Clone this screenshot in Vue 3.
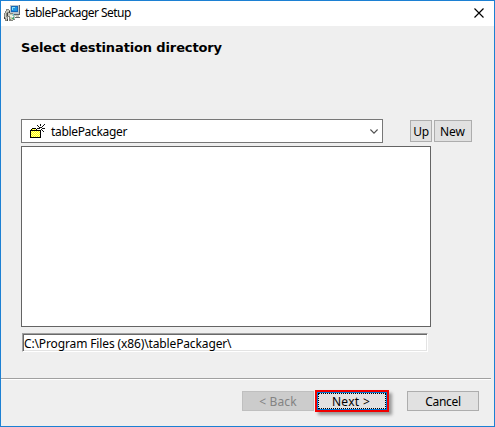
<script setup>
import { ref } from 'vue'

const folder = ref('tablePackager')
const path = ref('C:\\Program Files (x86)\\tablePackager\\')
</script>

<template>
  <main class="window">
    <header class="titlebar">
      <svg class="app-icon" viewBox="0 0 16 16" width="16" height="16" shape-rendering="crispEdges">
        <path d="M6 0h9v9H6z" fill="#b9c4cc" />
        <path d="M15 0h1v10h-1zM7 9h9v1H7z" fill="#59636b" />
        <path d="M7 1h7v6H7z" fill="#1568b8" />
        <path d="M8 2h5v4H8z" fill="#1c94e4" />
        <path d="M8 2h3v1H9v2H8z" fill="#8ee1f5" />
        <path d="M10 10h5v2h-3v-1h-2z" fill="#c3c3b6" />
        <path d="M11 12h5v1h-5z" fill="#65696a" />
        <path d="M2 4h3v1h1v3h3v2h2v5H9v1H5v-4H4v4H1v-3H0V8h1V6h1z" fill="#85867f" />
        <path d="M3 5h2v2H3v1H2v4h1v3H2v-2H1V8h1V6h1zM4 8h2v3H4z" fill="#c8c9be" />
        <path d="M6 9h4v1h1v4H9v1H7v-1H6z" fill="#b9ccbd" />
        <path d="M6 10h2v2H6z" fill="#edf3d6" />
        <path d="M8 11h1v1H8z" fill="#fff" />
        <path d="M9 12h1v2H8v-1h1z" fill="#48a775" />
        <path d="M7 13h1v1H7z" fill="#d9cf78" />
        <path d="M9 9h1v2H9z" fill="#61bfd0" />
        <path d="M0 12h1v2H0zM3 14h1v2H3zM3 8h1v3H3zM5 6h1v2H5z" fill="#444" />
      </svg>
      <span class="caption">tablePackager Setup</span>
      <svg class="close" viewBox="0 0 10 10" width="10" height="10">
        <path d="M.5.5l9 9M9.5.5l-9 9" stroke="#000" stroke-width="1.15" />
      </svg>
    </header>

    <section class="content">
      <h1>Select destination directory</h1>
      <div class="toolbar">
        <div class="combo">
          <svg class="folder" viewBox="0 0 16 14" width="16" height="14" shape-rendering="crispEdges">
            <defs>
              <pattern id="dither" width="2" height="2" patternUnits="userSpaceOnUse">
                <path d="M0 0h2v2H0z" fill="#ff0" />
                <path d="M0 0h1v1H0zM1 1h1v1H1z" fill="#ffffa8" />
              </pattern>
            </defs>
            <path d="M2 5h4v1H2zM1 7h9v6H1z" fill="url(#dither)" />
            <path d="M2 4h4v1H2zM1 5h1v1H1zM6 5h1v1H6zM0 6h11v1H0zM0 7h1v6H0zM10 7h1v6h-1zM0 13h11v1H0z" fill="#000" />
            <path d="M7 1h1v1H7zM8 2h1v1H8zM10 0h1v2h-1zM14 0h1v1h-1zM13 1h1v1h-1zM12 2h1v1h-1zM10 3h1v1h-1zM7 4h2v1H7zM12 4h3v1h-3zM9 4h1v1H9zM11 3h1v1h-1zM9 3h1v1H9zM11 5h1v1h-1zM12 6h1v1h-1zM13 7h1v1h-1z" fill="#111" />
          </svg>
          <span class="folder-name">{{ folder }}</span>
          <svg class="chevron" viewBox="0 0 8 5" width="8" height="5">
            <path d="M.4.5L4 4.1 7.6.5" fill="none" stroke="#505050" stroke-width="1.1" />
          </svg>
        </div>
        <button class="up">Up</button>
        <button class="new">New</button>
      </div>
      <div class="listing"></div>
      <div class="path"><span>{{ path }}</span></div>
    </section>

    <footer class="actions">
      <button class="back" disabled>&lt; Back</button>
      <div class="highlight"><button class="next"><span>Next &gt;</span></button></div>
      <button class="cancel">Cancel</button>
    </footer>
  </main>
</template>

<style>
body { margin: 0; overflow: hidden; }
</style>

<style scoped>
* { box-sizing: border-box; }
.window {
  width: 495px;
  height: 427px;
  display: flex;
  flex-direction: column;
  border: 1px solid #1c80d3;
  background: #efefef;
  color: #000;
  font: 12px/14px "Noto Sans", sans-serif;
  white-space: nowrap;
}
.titlebar {
  flex: none;
  height: 25px;
  display: flex;
  align-items: center;
  padding: 0 10px 0 3px;
  background: #fff;
}
.app-icon { margin-top: -1px; }
.caption { margin-left: 5px; padding-bottom: 2px; letter-spacing: -.53px; }
.close { margin-left: auto; margin-top: -1px; }
.content { flex: none; height: 352px; padding: 14px 0 0 20px; }
h1 { margin: 0; font: bold 13px/15px "DejaVu Sans", sans-serif; letter-spacing: -.13px; }
.toolbar { display: flex; align-items: center; margin-top: 64px; height: 24px; }
.combo {
  width: 362px;
  height: 24px;
  display: flex;
  align-items: center;
  padding: 0 4px 0 8px;
  border: 1px solid #777;
  background: #fff;
}
.folder-name { margin-left: 5px; padding-top: 1px; letter-spacing: -.33px; }
.chevron { margin-left: auto; }
button {
  flex: none;
  padding: 0;
  border: 1px solid #adadad;
  border-radius: 0;
  background: #e1e1e1;
  color: #000;
  font: inherit;
  height: 22px;
}
.up { width: 22px; margin-left: 27px; letter-spacing: -.4px; padding-top: 1px; }
.new { width: 38px; margin-left: 2px; padding: 1px 1px 0 0; }
.listing { width: 410px; height: 181px; margin-top: 3px; border: 1px solid #646464; background: #fff; }
.path {
  width: 406px;
  height: 19px;
  margin: 6px 0 0 1px;
  padding: 3px 0 0 1px;
  border: 1px solid;
  border-color: #a0a0a0 #fff #fff #a0a0a0;
  background: #fff;
  box-shadow: inset 1px 1px #696969, inset -1px -1px #e3e3e3;
  letter-spacing: -.13px;
}
.actions {
  width: 490px;
  height: 48px;
  display: flex;
  align-items: flex-start;
  padding: 11px 0 0 241px;
  border-top: 1px solid #a0a0a0;
  box-shadow: inset 0 1px #fff;
}
.actions button { width: 72px; height: 20px; margin-top: 1px; padding-top: 1px; }
.actions .back { background: #ccc; border-color: #bfbfbf; color: #838383; letter-spacing: .15px; }
.highlight { width: 74px; height: 22px; margin-left: 1px; border: 2px solid #f00000; box-shadow: 3px 3px 3px #999; }
.actions .next { width: 70px; height: 18px; margin: 0; padding: 0; border: 1px solid #0078d7; letter-spacing: .3px; }
.next span { display: block; height: 16px; line-height: 15px; padding-right: 2px; border: 1px dotted #000; }
.actions .cancel { margin-left: 18px; letter-spacing: -.3px; }
</style>
